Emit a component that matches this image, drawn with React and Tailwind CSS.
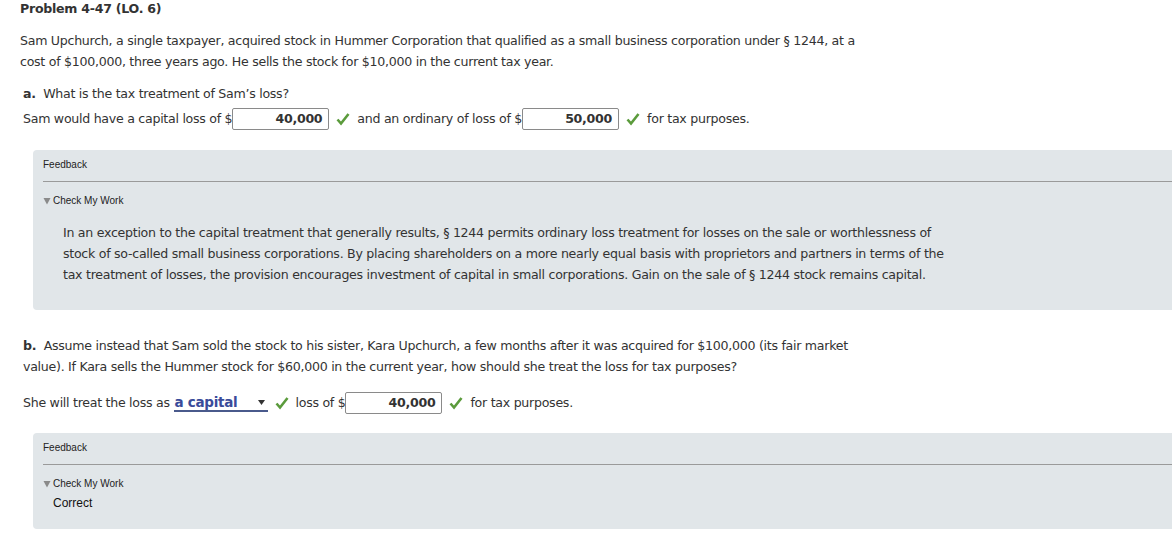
const Check = () => (
  <svg width="14" height="14" viewBox="0 0 14 14" className="mx-[7px] shrink-0">
    <path d="M1.5 7.5 L5 11.5 L12.5 2" fill="none" stroke="#5b9b3c" strokeWidth="2.6" />
  </svg>
);

const Box = ({ value }) => (
  <span className="inline-flex h-[22px] w-[97px] items-center justify-end rounded-[2px] border border-[#8a8a8a] bg-white pr-[6px] font-bold text-[#333]">
    {value}
  </span>
);

const Feedback = ({ children, pad = 'pb-[14px]' }) => (
  <div className={`ml-[33px] rounded-l-[4px] bg-[#e1e6e9] pt-[8px] ${pad}`} style={{ fontFamily: '"Liberation Sans", Arial, sans-serif', letterSpacing: 0 }}>
    <div className="pl-[10px] text-[10px] leading-[14px] text-[#222]">Feedback</div>
    <div className="ml-[10px] mt-[9px] border-t border-[#9a9a9a]" />
    <div className="mt-[12px] flex items-center pl-[10px] text-[10px] leading-[14px] text-[#222]">
      <svg width="8" height="8" viewBox="0 0 8 8" className="mr-[2px]">
        <path d="M0.5 1 L7.5 1 L4 7.5 Z" fill="#8a8a8a" />
      </svg>
      Check My Work
    </div>
    {children}
  </div>
);

export default function App() {
  return (
    <div className="h-[548px] w-[1172px] overflow-hidden bg-white text-[12.6px] tracking-[-0.28px] text-[#333]" style={{ fontFamily: '"DejaVu Sans", Verdana, sans-serif' }}>
      <div className="pl-[20px] pt-[1px] font-bold leading-[16px]">Problem 4-47 (LO. 6)</div>

      <p className="mt-[13px] w-[860px] pl-[20px] leading-[21px]">
        Sam Upchurch, a single taxpayer, acquired stock in Hummer Corporation that qualified as a small business corporation under § 1244, at a cost of $100,000, three years ago. He sells the stock for $10,000 in the current tax year.
      </p>

      <div className="mt-[14px] pl-[23px] leading-[16px]">
        <span className="font-bold">a.</span>&nbsp; What is the tax treatment of Sam’s loss?
      </div>

      <div className="mt-[6px] flex items-center pl-[23px]">
        <span>Sam would have a capital loss of $</span>
        <Box value="40,000" />
        <Check />
        <span>and an ordinary of loss of $</span>
        <Box value="50,000" />
        <Check />
        <span>for tax purposes.</span>
      </div>

      <div className="mt-[20px]">
        <Feedback pad="pb-[25px]">
          <p className="mt-[14px] w-[915px] pl-[30px] leading-[21px] text-[#333]" style={{ fontFamily: '"DejaVu Sans", Verdana, sans-serif', letterSpacing: '-0.28px' }}>
            In an exception to the capital treatment that generally results, § 1244 permits ordinary loss treatment for losses on the sale or worthlessness of stock of so-called small business corporations. By placing shareholders on a more nearly equal basis with proprietors and partners in terms of the tax treatment of losses, the provision encourages investment of capital in small corporations. Gain on the sale of § 1244 stock remains capital.
          </p>
        </Feedback>
      </div>

      <p className="mt-[25px] w-[865px] pl-[23px] leading-[21px]">
        <span className="font-bold">b.</span>&nbsp; Assume instead that Sam sold the stock to his sister, Kara Upchurch, a few months after it was acquired for $100,000 (its fair market value). If Kara sells the Hummer stock for $60,000 in the current year, how should she treat the loss for tax purposes?
      </p>

      <div className="mt-[15px] flex items-center pl-[23px]">
        <span>She will treat the loss as&nbsp;</span>
        <span className="inline-flex h-[18px] w-[94px] items-center justify-between border-b-2 border-[#4a5a8c] pl-[1px] pr-[3px] text-[13.5px] font-bold leading-[16px] text-[#3a4b9a]">
          a capital
          <svg width="7" height="5" viewBox="0 0 7 5">
            <path d="M0 0 L7 0 L3.5 5 Z" fill="#333" />
          </svg>
        </span>
        <Check />
        <span>loss of $</span>
        <Box value="40,000" />
        <Check />
        <span>for tax purposes.</span>
      </div>

      <div className="mt-[19px]">
        <Feedback pad="pb-[18px]">
          <div className="mt-[4px] pl-[20px] text-[12px] leading-[16px] text-[#111]">Correct</div>
        </Feedback>
      </div>
    </div>
  );
}
